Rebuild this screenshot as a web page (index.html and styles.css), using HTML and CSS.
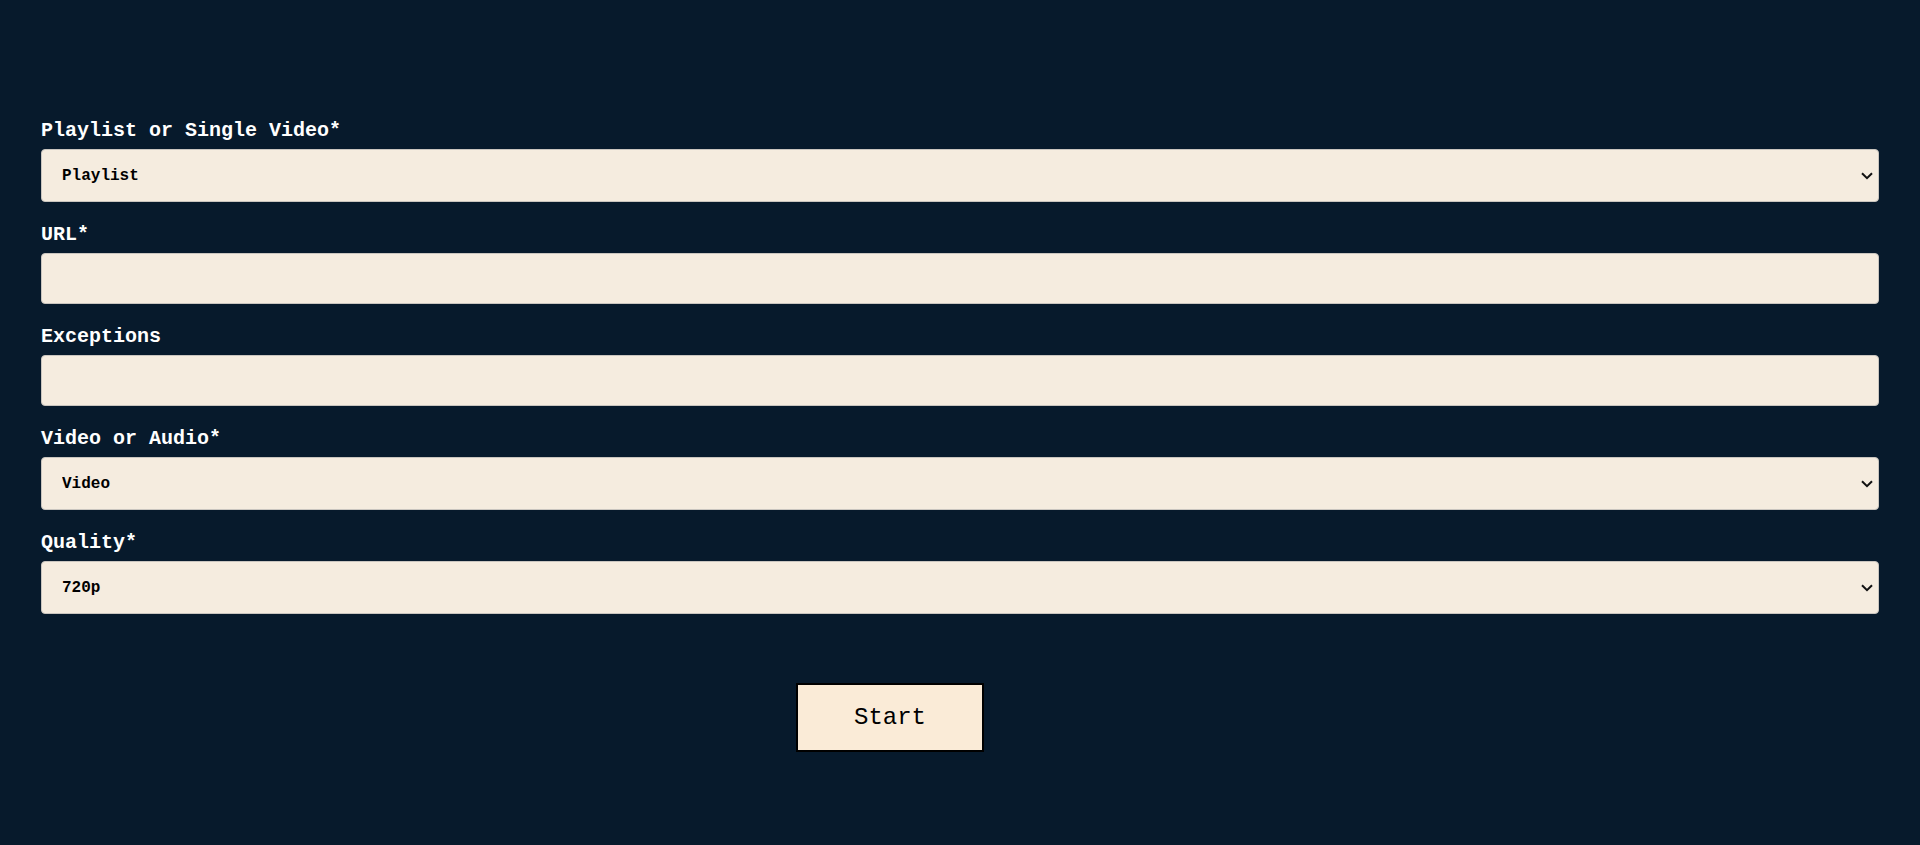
FILE: index.html
```html
<!DOCTYPE html>
<html lang="en">
<head>
<meta charset="utf-8">
<title>Downloader</title>
<link rel="stylesheet" href="styles.css">
</head>
<body>
<form class="form">
  <div class="group">
    <label class="label" for="kind">Playlist or Single Video*</label>
    <div class="select-wrap">
      <select class="control select" id="kind">
        <option>Playlist</option>
        <option>Single Video</option>
      </select>
      <svg class="chevron" width="12" height="8" viewBox="0 0 12 8" aria-hidden="true"><path d="M1 1.2 L6 6.2 L11 1.2" fill="none" stroke="#111" stroke-width="2"/></svg>
    </div>
  </div>
  <div class="group">
    <label class="label" for="url">URL*</label>
    <input class="control input" id="url" type="text">
  </div>
  <div class="group">
    <label class="label" for="exc">Exceptions</label>
    <input class="control input" id="exc" type="text">
  </div>
  <div class="group">
    <label class="label" for="media">Video or Audio*</label>
    <div class="select-wrap">
      <select class="control select" id="media">
        <option>Video</option>
        <option>Audio</option>
      </select>
      <svg class="chevron" width="12" height="8" viewBox="0 0 12 8" aria-hidden="true"><path d="M1 1.2 L6 6.2 L11 1.2" fill="none" stroke="#111" stroke-width="2"/></svg>
    </div>
  </div>
  <div class="group">
    <label class="label" for="quality">Quality*</label>
    <div class="select-wrap">
      <select class="control select" id="quality">
        <option>720p</option>
        <option>1080p</option>
        <option>480p</option>
      </select>
      <svg class="chevron" width="12" height="8" viewBox="0 0 12 8" aria-hidden="true"><path d="M1 1.2 L6 6.2 L11 1.2" fill="none" stroke="#111" stroke-width="2"/></svg>
    </div>
  </div>
  <div class="actions">
    <button class="start" type="button">Start</button>
  </div>
</form>
</body>
</html>
```
FILE: styles.css
```css
html, body {
  margin: 0;
  padding: 0;
  background: #071a2c;
  height: 100%;
}
body {
  font-family: "Courier New", "Liberation Mono", monospace;
}
.form {
  padding: 119px 41px 0 41px;
  display: flex;
  flex-direction: column;
}
.group {
  display: flex;
  flex-direction: column;
  margin-bottom: 21px;
}
.label {
  color: #ffffff;
  font-weight: bold;
  font-size: 20px;
  line-height: 23px;
  margin-bottom: 7px;
}
.control {
  box-sizing: border-box;
  width: 100%;
  background-color: #f5ecdf;
  border: 1px solid #c9c5bf;
  border-radius: 4px;
  font-family: "Courier New", "Liberation Mono", monospace;
  font-weight: bold;
  font-size: 16px;
  color: #000;
  margin: 0;
  outline: none;
}
.select-wrap {
  position: relative;
}
.select {
  -webkit-appearance: none;
  appearance: none;
  display: block;
  height: 53px;
  padding: 0 30px 0 20px;
}
.chevron {
  position: absolute;
  right: 6px;
  top: 23px;
  pointer-events: none;
}
.input {
  display: block;
  height: 51px;
  padding: 0 20px;
}
.actions {
  display: flex;
  padding-top: 48px;
  padding-left: 755px;
}
.start {
  box-sizing: border-box;
  width: 188px;
  height: 69px;
  background: #faebd7;
  border: 2px solid #000;
  border-radius: 0;
  font-family: "Courier New", "Liberation Mono", monospace;
  font-size: 24px;
  color: #000;
  padding: 0;
}
```
